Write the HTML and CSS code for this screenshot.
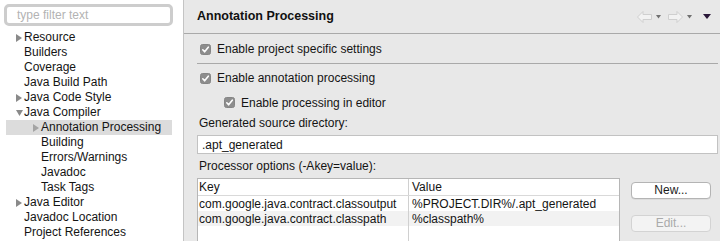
FILE: index.html
```html
<!DOCTYPE html>
<html>
<head>
<meta charset="utf-8">
<link rel="stylesheet" href="styles.css">
</head>
<body>
<div class="app">
  <aside class="sidebar">
    <div class="filter"><span class="placeholder">type filter text</span></div>
    <ul class="tree">
      <li class="node lvl0"><span class="tw"><svg width="6" height="8" viewBox="0 0 6 8"><polygon points="0,0 6,4 0,8" /></svg></span>Resource</li>
      <li class="node lvl0"><span class="tw"></span>Builders</li>
      <li class="node lvl0"><span class="tw"></span>Coverage</li>
      <li class="node lvl0"><span class="tw"></span>Java Build Path</li>
      <li class="node lvl0"><span class="tw"><svg width="6" height="8" viewBox="0 0 6 8"><polygon points="0,0 6,4 0,8" /></svg></span>Java Code Style</li>
      <li class="node lvl0"><span class="tw"><svg width="7" height="6" viewBox="0 0 7 6"><polygon points="0,0 7,0 3.5,6" /></svg></span>Java Compiler</li>
      <li class="node lvl1 selected"><span class="tw"><svg width="6" height="8" viewBox="0 0 6 8"><polygon points="0,0 6,4 0,8" /></svg></span>Annotation Processing</li>
      <li class="node lvl1"><span class="tw"></span>Building</li>
      <li class="node lvl1"><span class="tw"></span>Errors/Warnings</li>
      <li class="node lvl1"><span class="tw"></span>Javadoc</li>
      <li class="node lvl1"><span class="tw"></span>Task Tags</li>
      <li class="node lvl0"><span class="tw"><svg width="6" height="8" viewBox="0 0 6 8"><polygon points="0,0 6,4 0,8" /></svg></span>Java Editor</li>
      <li class="node lvl0"><span class="tw"></span>Javadoc Location</li>
      <li class="node lvl0"><span class="tw"></span>Project References</li>
    </ul>
  </aside>
  <main class="page">
    <header class="page-head">
      <h1 class="title">Annotation Processing</h1>
      <div class="nav">
        <svg class="arrow" width="15" height="12" viewBox="0 0 15 12"><polygon points="0.5,6 6,0.5 6,3.5 14.5,3.5 14.5,8.5 6,8.5 6,11.5" /></svg>
        <svg class="drop" width="5" height="4" viewBox="0 0 5 4"><polygon points="0,0 5,0 2.5,3.5" /></svg>
        <svg class="arrow fwd" width="15" height="12" viewBox="0 0 15 12"><polygon points="14.5,6 9,0.5 9,3.5 0.5,3.5 0.5,8.5 9,8.5 9,11.5" /></svg>
        <svg class="drop" width="5" height="4" viewBox="0 0 5 4"><polygon points="0,0 5,0 2.5,3.5" /></svg>
        <svg class="menu" width="8" height="5" viewBox="0 0 8 5"><polygon points="0,0 8,0 4,5" /></svg>
      </div>
    </header>
    <div class="content">
      <label class="check row-1"><span class="box"><svg width="11" height="11" viewBox="0 0 11 11"><polyline points="2.8,5.8 4.6,7.8 8.3,3.2" /></svg></span>Enable project specific settings</label>
      <div class="sep"></div>
      <label class="check row-2"><span class="box"><svg width="11" height="11" viewBox="0 0 11 11"><polyline points="2.8,5.8 4.6,7.8 8.3,3.2" /></svg></span>Enable annotation processing</label>
      <label class="check row-3"><span class="box"><svg width="11" height="11" viewBox="0 0 11 11"><polyline points="2.8,5.8 4.6,7.8 8.3,3.2" /></svg></span>Enable processing in editor</label>
      <div class="label label-1">Generated source directory:</div>
      <div class="textfield">.apt_generated</div>
      <div class="label label-2">Processor options (-Akey=value):</div>
      <div class="options">
        <div class="table">
          <div class="tr th"><div class="c k">Key</div><div class="c v">Value</div></div>
          <div class="tr"><div class="c k">com.google.java.contract.classoutput</div><div class="c v">%PROJECT.DIR%/.apt_generated</div></div>
          <div class="tr alt"><div class="c k">com.google.java.contract.classpath</div><div class="c v">%classpath%</div></div>
          <div class="tr"><div class="c k"></div><div class="c v"></div></div>
        </div>
        <div class="buttons">
          <button class="btn">New...</button>
          <button class="btn disabled">Edit...</button>
        </div>
      </div>
    </div>
  </main>
</div>
</body>
</html>
```
FILE: styles.css
```css
* { box-sizing: border-box; }
html, body { margin: 0; padding: 0; }
body {
  width: 720px;
  height: 241px;
  overflow: hidden;
  font-family: "Liberation Sans", Arial, sans-serif;
  font-size: 12px;
  color: #141414;
  background: #e8e8e8;
}
.app { display: flex; height: 241px; overflow: hidden; }

/* sidebar */
.sidebar {
  width: 184px;
  flex: none;
  background: #fff;
  border-right: 1px solid #c4c4c4;
  padding-top: 4px;
}
.filter {
  margin-left: 4px;
  width: 169px;
  height: 22px;
  border: 3px solid #cdcdcd;
  border-radius: 5px;
  background: #fff;
  display: flex;
  align-items: center;
  padding-left: 10px;
}
.placeholder { color: #b3b3b3; font-size: 12px; }
.tree {
  list-style: none;
  margin: 4px 0 0 6px;
  padding: 0;
  width: 166px;
}
.node {
  height: 15px;
  line-height: 15px;
  display: flex;
  align-items: center;
  white-space: nowrap;
}
.lvl0 { padding-left: 10px; }
.lvl1 { padding-left: 27px; }
.tw { width: 8px; flex: none; display: flex; align-items: center; }
.tw svg { fill: #8a8a8a; display: block; }
.selected { background: #dcdcdc; }
.selected .tw svg { fill: #a4a4a4; }

/* page */
.page { flex: 1; display: flex; flex-direction: column; min-width: 0; }
.page > * { flex-shrink: 0; }
.page-head {
  height: 34px;
  border-bottom: 1px solid #a9a9a9;
  display: flex;
  align-items: center;
  padding: 0 9px 1px 13px;
}
.title {
  margin: 0;
  font-size: 12.5px;
  font-weight: bold;
  color: #111;
  flex: 1;
}
.nav { display: flex; align-items: center; padding-top: 1px; }
.arrow { fill: #f2f2f2; stroke: #cfcfcf; stroke-width: 1; }
.drop { fill: #707070; margin: 1px 7px 0 4px; }
.menu { fill: #2a1838; margin-left: 4px; }

.content {
  display: flex;
  flex-direction: column;
  padding: 0 2px 0 13px;
}
.content > * { flex-shrink: 0; }
.check {
  display: flex;
  align-items: center;
  white-space: nowrap;
}
.box {
  width: 11px;
  height: 11px;
  border-radius: 2.5px;
  background: #8d8d8d;
  border: 1px solid #858585;
  margin: 0 6px 0 3px;
  display: flex;
  align-items: center;
  justify-content: center;
}
.box svg { display: block; fill: none; stroke: #fff; stroke-width: 1.6; stroke-linecap: round; stroke-linejoin: round; flex: none; }
.row-1 { height: 29px; padding-top: 1px; }
.sep { height: 1px; background: #a9a9a9; }
.row-2 { height: 28px; }
.row-3 { height: 20px; padding-left: 24px; padding-top: 1px; }
.label { display: flex; align-items: center; padding-left: 2px; }
.label-1 { height: 22px; }
.textfield {
  margin-top: 1px;
  height: 19px;
  background: #fff;
  border: 1px solid #c2c2c2;
  display: flex;
  align-items: center;
  padding-left: 4px;
  padding-top: 1px;
}
.label-2 { height: 24px; }

.options { display: flex; align-items: flex-start; }
.table {
  width: 423px;
  flex: none;
  background: #fff;
  border: 1px solid #b6b6b6;
  border-bottom: none;
  height: 70px;
}
.tr { display: flex; height: 15px; }
.tr.th { height: 17px; border-bottom: 1px solid #d9d9d9; }
.tr.alt { background: #f2f2f2; }
.c { display: flex; align-items: center; padding-left: 1px; white-space: nowrap; overflow: hidden; }
.c.k { width: 211px; border-right: 1px solid #d0d0d0; }
.c.v { flex: 1; padding-left: 3px; }
.buttons {
  display: flex;
  flex-direction: column;
  margin-left: 11px;
  padding-top: 4px;
  gap: 16px;
}
.btn {
  width: 80px;
  height: 17px;
  padding: 0;
  font-family: "Liberation Sans", Arial, sans-serif;
  font-size: 12px;
  color: #1a1a1a;
  background: #fff;
  border: 1px solid #b4b4b4;
  border-radius: 4px;
  box-shadow: 0 0.5px 0 rgba(0,0,0,0.1);
  line-height: 15px;
}
.btn.disabled { color: #aaaaaa; background: #f3f3f3; border-color: #d3d3d3; box-shadow: none; }
```
